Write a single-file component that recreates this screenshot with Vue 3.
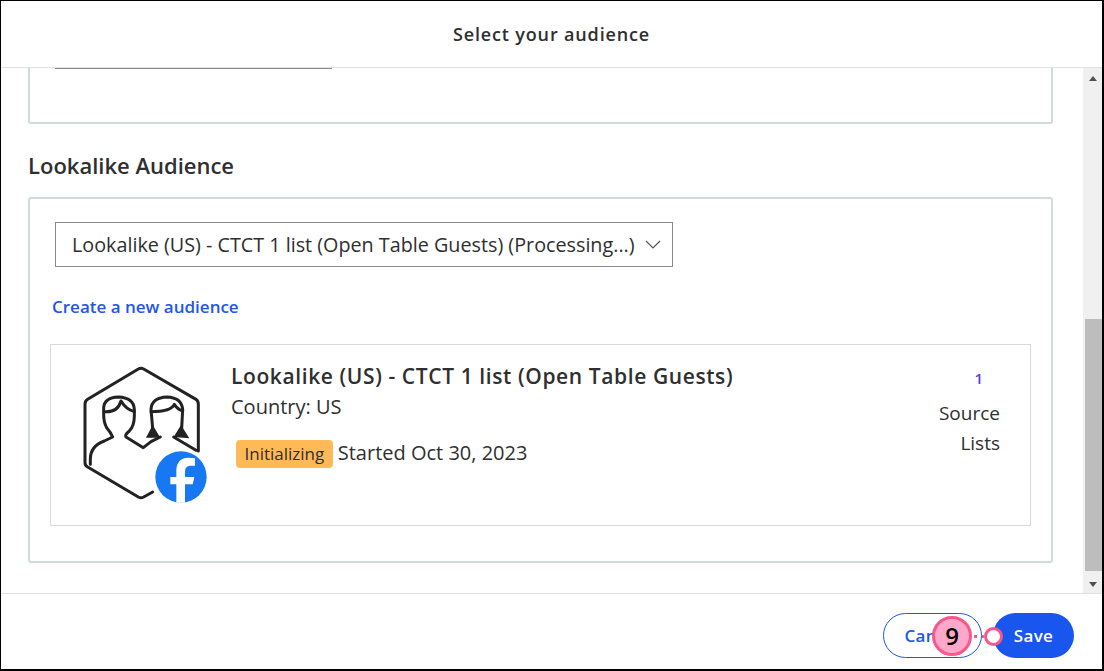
<template>
	<div class="modal">
		<div class="header">Select your audience</div>
		<div class="middle">
			<div class="content">
				<div class="card top-card">
					<div class="cut-input"></div>
				</div>
				<h2 class="title">Lookalike Audience</h2>
				<div class="card main-card">
					<div class="select">
						<span class="select-text">{{ audience }} (Processing...)</span>
						<svg class="chevron" width="16" height="9" viewBox="0 0 16 9">
							<path d="M1 1l7 7 7-7" fill="none" stroke="#555" stroke-width="1.2" />
						</svg>
					</div>
					<a class="create-link">Create a new audience</a>
					<div class="audience">
						<div class="icon-wrap">
							<svg width="170" height="160" viewBox="0 0 510 480">
								<g fill="none" stroke="#222" stroke-width="9" stroke-linejoin="round" stroke-linecap="round">
									<path d="M275 423L248 438Q240 442 232 438L80 348Q72 343 72 335L72 160Q72 150 80 145L232 54Q240 50 248 54L405 145Q412 150 412 160L412 300" />
									<path d="M88 340L88 325Q88 285 130 270L155 258Q150 245 137 230Q128 215 128 190L128 170Q130 140 172 138Q218 140 220 175L220 195Q220 225 205 240Q190 252 195 258L247 290L270 272L298 258" />
									<path d="M130 182Q170 185 180 150Q195 175 220 182" />
									<path d="M275 232L270 175Q272 140 318 138Q362 140 365 175L362 232" />
									<path d="M270 182Q330 182 340 160Q350 175 365 180" />
									<path d="M338 258L405 298" />
								</g>
								<path d="M275 222L255 260L298 260ZM360 222L338 258L385 262Z" fill="#222" />
								<circle cx="360" cy="378" r="77" fill="#1877f2" />
								<path d="M372 455V400H395L400 378H372V362C372 350 378 344 390 344H402V322Q390 320 382 320C358 320 346 336 346 358V378H328V400H346V455Z" fill="#fff" />
							</svg>
						</div>
						<div class="info">
							<div class="name">{{ audience }}</div>
							<div class="country">Country: US</div>
							<div class="status">
								<span class="badge">Initializing</span>
								<span class="started">Started Oct 30, 2023</span>
							</div>
						</div>
						<div class="lists">
							<div class="count">1</div>
							<div>Source</div>
							<div>Lists</div>
						</div>
					</div>
				</div>
			</div>
			<div class="scrollbar">
				<div class="arrow up"></div>
				<div class="track"><div class="thumb"></div></div>
				<div class="arrow down"></div>
			</div>
		</div>
		<div class="footer">
			<button class="btn cancel">Cancel</button>
			<button class="btn save">Save</button>
		</div>
		<div class="callout">
			<div class="callout-num">9</div>
			<div class="callout-line"></div>
			<div class="callout-ring"></div>
		</div>
	</div>
</template>

<script setup>
const audience = 'Lookalike (US) - CTCT 1 list (Open Table Guests)'
</script>

<style scoped>
.modal {
	position: relative;
	box-sizing: border-box;
	width: 1104px;
	height: 671px;
	border: 1px solid #000;
	border-right-width: 2px;
	border-bottom-width: 2px;
	display: flex;
	flex-direction: column;
	background: #fff;
	color: #2f2f2f;
	font-family: "Open Sans", Lato, sans-serif;
	overflow: hidden;
}

.header {
	height: 66px;
	flex: none;
	display: flex;
	align-items: center;
	justify-content: center;
	border-bottom: 1px solid #e1e1e1;
	font-size: 18px;
	font-weight: 600;
	letter-spacing: 0.85px;
}

.middle {
	flex: 1;
	display: flex;
	min-height: 0;
}

.content {
	flex: 1;
	padding: 0 30px 0 27px;
}

.card {
	border: 2px solid #cfdcdc;
	border-radius: 3px;
	box-sizing: border-box;
}

.top-card {
	height: 56px;
	border-top: 0;
	border-radius: 0 0 3px 3px;
	padding-left: 25px;
}

.cut-input {
	width: 277px;
	height: 1px;
	background: #8a8a8a;
}

.title {
	margin: 27px 0 18px;
	font-size: 22px;
	line-height: 28px;
	font-weight: 600;
}

.main-card {
	height: 366px;
	padding: 23px 20px 0;
}

.select {
	box-sizing: border-box;
	width: 618px;
	height: 45px;
	margin-left: 5px;
	border: 1px solid #8a8a8a;
	display: flex;
	align-items: center;
	justify-content: space-between;
	padding: 0 11px 0 16px;
	font-size: 19.75px;
}

.select-text {
	white-space: nowrap;
}

.create-link {
	display: block;
	margin: 29px 0 0 2px;
	font-size: 17px;
	line-height: 22px;
	font-weight: 600;
	color: #1d56ee;
}

.audience {
	box-sizing: border-box;
	width: 981px;
	height: 182px;
	margin-top: 26px;
	border: 1px solid #d9d9d9;
	display: flex;
}

.icon-wrap {
	width: 180px;
	flex: none;
	padding: 6px 0 0 10px;
	box-sizing: border-box;
}

.info {
	flex: 1;
	padding-top: 18px;
}

.name {
	font-size: 21px;
	line-height: 26px;
	font-weight: 600;
	letter-spacing: 0.6px;
}

.country {
	margin-top: 5px;
	font-size: 20px;
	line-height: 26px;
}

.status {
	display: flex;
	align-items: center;
	gap: 5px;
	margin: 19px 0 0 5px;
	font-size: 20px;
}

.started {
	margin-bottom: 3px;
}

.badge {
	background: #ffba57;
	border-radius: 4px;
	padding: 0 8.5px;
	height: 28px;
	line-height: 27px;
	font-size: 17px;
}

.lists {
	width: 100px;
	flex: none;
	padding: 21px 30px 0 0;
	text-align: right;
	font-size: 19px;
	line-height: 30px;
	box-sizing: border-box;
}

.count {
	font-size: 15px;
	font-weight: 600;
	color: #5b3fe0;
	padding-right: 17px;
	margin-bottom: 8px;
	line-height: 24px;
}

.scrollbar {
	width: 19px;
	flex: none;
	background: #f0f0f0;
	display: flex;
	flex-direction: column;
	align-items: center;
}

.arrow {
	width: 0;
	height: 0;
	border-left: 4.5px solid transparent;
	border-right: 4.5px solid transparent;
	flex: none;
}

.arrow.up {
	border-bottom: 5px solid #505050;
	margin-top: 8px;
}

.arrow.down {
	border-top: 5px solid #505050;
	margin: 6px 0 6px;
}

.track {
	flex: 1;
	width: 100%;
	padding-top: 238px;
	box-sizing: border-box;
}

.thumb {
	margin-left: 2px;
	width: 17px;
	height: 252px;
	background: #bdbdbd;
}

.footer {
	height: 76px;
	flex: none;
	box-sizing: border-box;
	border-top: 1px solid #e1e1e1;
	display: flex;
	justify-content: flex-end;
	align-items: flex-start;
	padding: 19px 28px 0 0;
	gap: 11px;
}

.btn {
	height: 45px;
	border-radius: 23px;
	font-family: inherit;
	font-size: 17px;
	font-weight: 600;
	letter-spacing: 0.3px;
}

.cancel {
	width: 99px;
	background: #fff;
	border: 1px solid #1d56ee;
	color: #1d56ee;
}

.save {
	width: 81px;
	background: #1856ee;
	border: 0;
	color: #fff;
}

/* annotation marker over the buttons */
.callout {
	position: absolute;
	left: 931px;
	top: 615px;
	display: flex;
	align-items: center;
}

.callout-num {
	box-sizing: border-box;
	width: 40px;
	height: 40px;
	border-radius: 50%;
	border: 3px solid #f9568f;
	background: #ffa8c9;
	color: #000;
	font-size: 24px;
	font-weight: 600;
	text-align: center;
	line-height: 33px;
}

.callout-line {
	width: 12px;
	height: 3px;
	background: linear-gradient(90deg, transparent 2px, #f9568f 2px, #f9568f 5px, transparent 5px, transparent 10px, #f9568f 10px);
}

.callout-ring {
	box-sizing: border-box;
	width: 19px;
	height: 19px;
	border-radius: 50%;
	border: 3px solid #f9568f;
	background: #fff;
}
</style>

<style>
html, body {
	margin: 0;
	background: #fff;
}
</style>
